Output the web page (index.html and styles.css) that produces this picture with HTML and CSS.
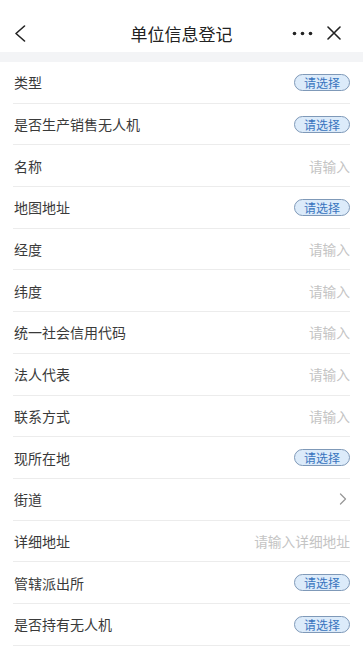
FILE: index.html
```html
<!DOCTYPE html>
<html lang="zh-CN">
<head>
<meta charset="utf-8">
<title>单位信息登记</title>
<link rel="stylesheet" href="styles.css">
</head>
<body>
<div class="page">
  <header class="nav">
    <div class="nav-left">
      <svg class="icon-back" width="12" height="17" viewBox="0 0 12 17"><path d="M10.5 1 L2 8.5 L10.5 16" fill="none" stroke="#222" stroke-width="1.6" stroke-linecap="round" stroke-linejoin="round"/></svg>
    </div>
    <div class="nav-title">单位信息登记</div>
    <div class="nav-right">
      <svg class="icon-more" width="21" height="5" viewBox="0 0 21 5"><circle cx="2.5" cy="2.5" r="1.8" fill="#222"/><circle cx="10.5" cy="2.5" r="1.8" fill="#222"/><circle cx="18.5" cy="2.5" r="1.8" fill="#222"/></svg>
      <svg class="icon-close" width="14" height="14" viewBox="0 0 14 14"><path d="M1 1 L13 13 M13 1 L1 13" fill="none" stroke="#222" stroke-width="1.6" stroke-linecap="round"/></svg>
    </div>
  </header>
  <div class="band"></div>
  <ul class="form">
    <li class="row"><span class="label">类型</span><span class="pick">请选择</span></li>
    <li class="row"><span class="label">是否生产销售无人机</span><span class="pick">请选择</span></li>
    <li class="row"><span class="label">名称</span><span class="ph">请输入</span></li>
    <li class="row"><span class="label">地图地址</span><span class="pick">请选择</span></li>
    <li class="row"><span class="label">经度</span><span class="ph">请输入</span></li>
    <li class="row"><span class="label">纬度</span><span class="ph">请输入</span></li>
    <li class="row"><span class="label">统一社会信用代码</span><span class="ph">请输入</span></li>
    <li class="row"><span class="label">法人代表</span><span class="ph">请输入</span></li>
    <li class="row"><span class="label">联系方式</span><span class="ph">请输入</span></li>
    <li class="row"><span class="label">现所在地</span><span class="pick">请选择</span></li>
    <li class="row"><span class="label">街道</span><svg class="arrow" width="8" height="12" viewBox="0 0 8 12"><path d="M1.5 1 L6.5 6 L1.5 11" fill="none" stroke="#999" stroke-width="1.3" stroke-linecap="round" stroke-linejoin="round"/></svg></li>
    <li class="row"><span class="label">详细地址</span><span class="ph">请输入详细地址</span></li>
    <li class="row"><span class="label">管辖派出所</span><span class="pick">请选择</span></li>
    <li class="row"><span class="label">是否持有无人机</span><span class="pick">请选择</span></li>
  </ul>
</div>
</body>
</html>
```

FILE: styles.css
```css
* { box-sizing: border-box; }
html, body {
  margin: 0;
  padding: 0;
  background: #fff;
}
body {
  font-family: "Noto Sans CJK SC", "Noto Sans", sans-serif;
  color: #333;
}
.page {
  width: 363px;
  min-height: 656px;
  background: #fff;
}
.nav {
  height: 52px;
  padding: 14px 0 0;
  display: flex;
  align-items: center;
}
.nav > * { height: 38px; display: flex; align-items: center; }
.nav-left {
  width: 80px;
  padding-left: 14px;
}
.nav-title {
  flex: 1;
  justify-content: center;
  font-size: 17px;
  color: #222;
}
.nav-right {
  width: 80px;
  justify-content: flex-end;
  padding-right: 22px;
  gap: 14px;
}
.band {
  height: 10px;
  background: #f3f4f6;
}
.form {
  list-style: none;
  margin: 0;
  padding: 0;
}
.row {
  height: 41.7px;
  margin: 0 13px;
  padding-left: 1px;
  display: flex;
  align-items: center;
  justify-content: space-between;
  border-bottom: 1px solid #ececec;
}
.label {
  font-size: 14px;
  color: #3a3a3a;
}
.ph {
  font-size: 13.7px;
  color: #c4c4c4;
}
.pick {
  font-size: 12px;
  line-height: 15px;
  height: 17px;
  padding: 0 9px;
  border: 1px solid #7f99b8;
  border-radius: 9px;
  background: #dcebfa;
  color: #3874be;
}
.arrow {
  margin-right: 3px;
}
```
